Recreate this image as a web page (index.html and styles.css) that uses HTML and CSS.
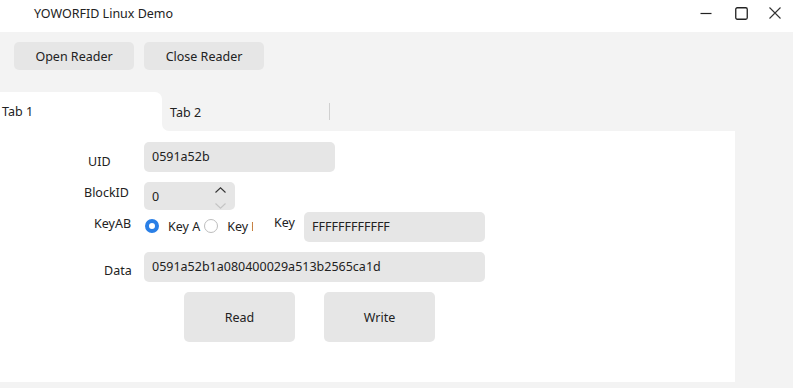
FILE: index.html
```html
<!DOCTYPE html>
<html>
<head>
<meta charset="utf-8">
<link rel="stylesheet" href="styles.css">
</head>
<body>
<div class="window">
  <div class="titlebar">
    <div class="title">YOWORFID Linux Demo</div>
    <div class="controls">
      <div class="ctl"><svg width="12" height="12" viewBox="0 0 12 12"><path d="M0.5 6.5H11.5" stroke="#222" stroke-width="1.2"/></svg></div>
      <div class="ctl"><svg width="13" height="13" viewBox="0 0 13 13"><rect x="0.75" y="0.75" width="11.5" height="11.5" rx="1.5" fill="none" stroke="#222" stroke-width="1.3"/></svg></div>
      <div class="ctl"><svg width="12" height="12" viewBox="0 0 12 12"><path d="M0.5 0.5L11.5 11.5M11.5 0.5L0.5 11.5" stroke="#333" stroke-width="1.1"/></svg></div>
    </div>
  </div>
  <div class="body">
    <div class="toolbar">
      <button class="btn">Open Reader</button>
      <button class="btn">Close Reader</button>
    </div>
    <div class="tabs">
      <div class="tab active">Tab 1</div>
      <div class="tabrest">
        <div class="tab2"><span class="tab2-label">Tab 2</span><span class="sep"></span></div>
      </div>
    </div>
    <div class="panel">
      <div class="row row-uid">
        <div class="label label-uid">UID</div>
        <div class="field uid">0591a52b</div>
      </div>
      <div class="row row-block">
        <div class="label label-block">BlockID</div>
        <div class="field spin">
          <span>0</span>
          <div class="arrows">
            <svg width="11" height="6" viewBox="0 0 11 6"><path d="M0.5 5.5L5.5 0.8L10.5 5.5" fill="none" stroke="#333" stroke-width="1.1"/></svg>
            <svg width="11" height="6" viewBox="0 0 11 6"><path d="M0.5 0.5L5.5 5.2L10.5 0.5" fill="none" stroke="#c4c4c4" stroke-width="1.1"/></svg>
          </div>
        </div>
      </div>
      <div class="row row-key">
        <div class="label label-keyab">KeyAB</div>
        <div class="radios">
          <span class="radio checked"></span>
          <span class="rtext">Key A</span>
          <span class="radio"></span>
          <span class="rtext clip">Key B</span>
        </div>
        <div class="label label-key">Key</div>
        <div class="field key">FFFFFFFFFFFF</div>
      </div>
      <div class="row row-data">
        <div class="label label-data">Data</div>
        <div class="field data">0591a52b1a080400029a513b2565ca1d</div>
      </div>
      <div class="row row-actions">
        <button class="btn big">Read</button>
        <button class="btn big">Write</button>
      </div>
    </div>
  </div>
</div>
</body>
</html>
```
FILE: styles.css
```css
* { box-sizing: border-box; }
html, body { margin: 0; padding: 0; }
body {
  width: 793px;
  height: 388px;
  overflow: hidden;
  font-family: "Noto Sans", "Open Sans", sans-serif;
  font-size: 12.5px;
  color: #222;
  background: #f3f3f3;
}
.window { width: 793px; height: 388px; display: flex; flex-direction: column; }
.titlebar {
  height: 32px;
  background: #fff;
  display: flex;
  align-items: flex-start;
  justify-content: space-between;
}
.title { padding-left: 34px; line-height: 28px; }
.controls { display: flex; margin-right: 1px; }
.ctl {
  width: 34px;
  height: 26px;
  display: flex;
  align-items: center;
  justify-content: center;
}
.ctl:first-child { padding-right: 3px; }
.body { flex: 1; display: flex; flex-direction: column; background: #f3f3f3; }
.toolbar { display: flex; gap: 10px; padding: 10px 0 0 14px; height: 60px; }
.btn {
  font: inherit;
  color: #222;
  border: none;
  background: #e6e6e6;
  border-radius: 5px;
  width: 120px;
  height: 28px;
  padding: 0;
  padding-top: 1px;
}
.tabs { display: flex; height: 39px; width: 735px; }
.tab.active {
  width: 162px;
  background: #fff;
  border-top-right-radius: 7px;
  padding-left: 2px;
  line-height: 40px;
}
.tabrest { flex: 1; background: #fff; display: flex; }
.tab2 {
  flex: 1;
  background: #f3f3f3;
  border-bottom-left-radius: 7px;
  display: flex;
  align-items: center;
}
.tab2-label { width: 167px; padding-left: 8px; padding-top: 1px; }
.sep { width: 1px; height: 17px; background: #d0d0d0; }
.panel {
  width: 735px;
  height: 251px;
  background: #fff;
  padding-top: 11px;
  display: flex;
  flex-direction: column;
}
.row { display: flex; align-items: flex-start; }
.label { width: 144px; line-height: 18px; }
.label-uid { padding-left: 88px; margin-top: 11px; }
.label-block { padding-left: 84px; margin-top: 2px; }
.label-keyab { padding-left: 94px; margin-top: 3px; }
.label-data { padding-left: 104px; margin-top: 10px; }
.label-key { width: 30px; margin-left: 19px; margin-top: 2px; }
.field {
  background: #e6e6e6;
  border-radius: 5px;
  height: 30px;
  line-height: 30px;
  padding-left: 8px;
}
.uid { width: 191px; }
.row-block { margin-top: 10px; }
.spin {
  width: 91px;
  height: 28px;
  line-height: 29px;
  display: flex;
  justify-content: space-between;
}
.arrows {
  width: 30px;
  display: flex;
  flex-direction: column;
  align-items: center;
  padding-top: 5px;
  gap: 10px;
}
.arrows svg { display: block; }
.row-key { margin-top: 2px; }
.radios { display: flex; align-items: center; height: 28px; width: 111px; }
.radio {
  width: 14px;
  height: 14px;
  border-radius: 50%;
  border: 1px solid #bdbdbd;
  background: #fff;
  margin-left: 2px;
}
.radio.checked {
  border: 4px solid #2a7fe6;
  background: #fff;
  margin-left: 1px;
}
.rtext { margin-left: 8px; padding-top: 1px; }
.radios .rtext:nth-child(2) { margin-left: 9px; margin-right: 3px; }
.radios .radio:nth-child(3) { margin-left: 1px; }
.clip { width: 26px; overflow: hidden; white-space: nowrap; margin-left: 9px; }
.key { width: 181px; margin-left: 0; }
.row-data { margin-top: 10px; }
.data { width: 341px; }
.row-actions { margin-top: 10px; padding-left: 184px; gap: 29px; }
.btn.big { width: 111px; height: 50px; }
```
